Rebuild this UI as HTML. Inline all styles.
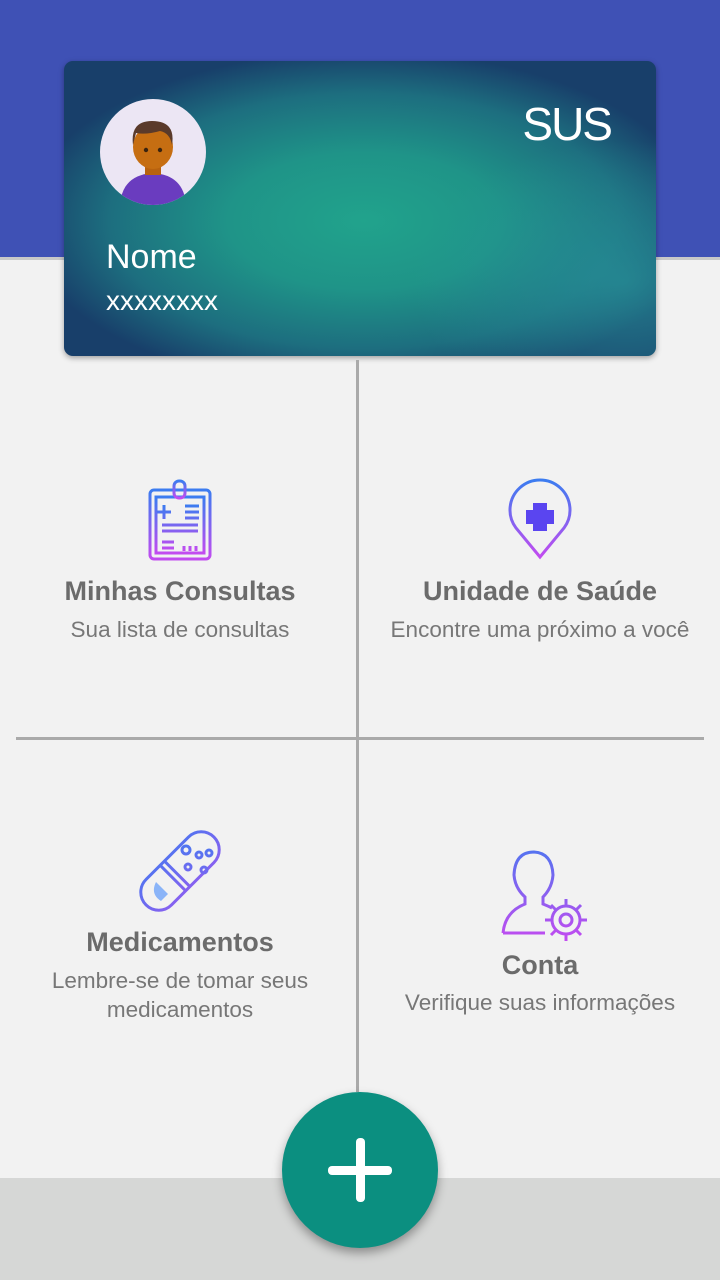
<!DOCTYPE html>
<html><head><meta charset="utf-8"><style>
*{margin:0;padding:0;box-sizing:border-box}
body{width:720px;height:1280px;background:#f2f2f2;position:relative;overflow:hidden;font-family:"Liberation Sans",Roboto,sans-serif}
.hdr{position:absolute;left:0;top:0;width:720px;height:260px;background:#3f51b5;border-bottom:3px solid #c8c8c8}
.card{position:absolute;left:64px;top:61px;width:592px;height:295px;border-radius:9px;overflow:hidden;
background:radial-gradient(ellipse 340px 170px at 300px 160px,#21a38c 0%,#1f9488 40%,#1d6e7f 75%,#183f6a 100%),#183f6a;
box-shadow:0 2px 6px rgba(0,0,0,.35)}
.card .r{position:absolute;inset:0;background:radial-gradient(ellipse 300px 200px at 560px 220px,rgba(40,150,155,.7),rgba(40,150,155,0) 70%)}
.av{position:absolute;left:36px;top:38px;width:106px;height:106px;border-radius:50%;background:#ece6f4;overflow:hidden}
.sus{position:absolute;right:45px;top:36px;color:#fff;font-size:46px;letter-spacing:-2px}
.nome{position:absolute;left:42px;top:177px;color:#fff;font-size:34px}
.num{position:absolute;left:42px;top:224px;color:#fff;font-size:28px}
.vl{position:absolute;left:356px;top:360px;width:3px;height:732px;background:#aaa}
.hl{position:absolute;left:16px;top:737px;width:688px;height:3px;background:#aaa}
.t{position:absolute;text-align:center;color:#6b6b6b;font-weight:bold;font-size:27px;width:360px}
.s{position:absolute;text-align:center;color:#777;font-size:22.5px;width:360px;line-height:29px}
.bot{position:absolute;left:0;top:1178px;width:720px;height:102px;background:#d6d7d6}
.fab{position:absolute;left:282px;top:1092px;width:156px;height:156px;border-radius:50%;background:#0b8f80;box-shadow:0 5px 10px rgba(0,0,0,.35)}
.fab:before{content:"";position:absolute;left:46px;top:74px;width:64px;height:9px;background:#fff;border-radius:4px}
.fab:after{content:"";position:absolute;left:74px;top:46px;width:9px;height:64px;background:#fff;border-radius:4px}
</style></head><body>
<div class="hdr"></div>
<div class="card"><div class="r"></div>
<div class="av"><svg width="106" height="106" viewBox="0 0 106 106">
<path d="M20 106 Q22 76 53 74 Q84 76 86 106Z" fill="#6a3cbf"/>
<rect x="45" y="62" width="16" height="14" fill="#b8620f"/>
<ellipse cx="53" cy="48" rx="20" ry="22" fill="#c66e12"/>
<path d="M33 46 Q30 22 52 22 Q76 22 72 46 Q70 34 60 32 Q46 36 36 34Z" fill="#5a3a2a"/>
<circle cx="46" cy="51" r="2.2" fill="#3a2410"/><circle cx="60" cy="51" r="2.2" fill="#3a2410"/>
</svg></div>
<div class="sus">SUS</div>
<div class="nome">Nome</div>
<div class="num">xxxxxxxx</div>
</div>
<div class="vl"></div><div class="hl"></div>
<svg style="position:absolute;left:0;top:0" width="720" height="1280">
<defs><linearGradient id="g" x1="0" y1="0" x2="0" y2="1"><stop offset="0" stop-color="#3c7cf0"/><stop offset="1" stop-color="#c24cf0"/></linearGradient>
<linearGradient id="g2" gradientUnits="userSpaceOnUse" x1="0" y1="830" x2="0" y2="940"><stop offset="0" stop-color="#3c7cf0"/><stop offset="1" stop-color="#c24cf0"/></linearGradient></defs>
<g fill="none" stroke="url(#g)" stroke-width="3">
<rect x="150" y="490" width="60" height="69" rx="4"/>
<rect x="156" y="497" width="48" height="56"/>
<rect x="174" y="481" width="11" height="17" rx="5"/>
<path d="M164 505v14M157 512h14M185 506h14M185 512h14M185 518h14M162 525h36M162 531h36M162 542h12M162 548h12M184 546v5M190 546v5M196 546v5"/>
<path d="M540 557 L516 528 A30 30 0 1 1 564 528 Z"/>
</g>
<g fill="none" stroke="url(#g2)" stroke-width="3">
<g transform="rotate(-45 180 871)">
<rect x="132" y="853" width="96" height="36" rx="18"/>
<path d="M170 853v36M176 853v36"/>
</g>
<circle cx="186" cy="850" r="4"/><circle cx="199" cy="855" r="3"/><circle cx="209" cy="853" r="3"/><circle cx="204" cy="870" r="3"/><circle cx="188" cy="867" r="3"/>
<path d="M503 933 Q505 912 525 904 L525 897 Q515 888 514 875 Q515 852 534 852 Q552 853 553 875 Q552 888 543 897 L543 904 Q548 906 552 908"/>
<path d="M503 933 H545"/>
<circle cx="566" cy="920" r="6"/>
<path d="M566 899v7M566 934v7M545 920h7M580 920h7M551 905l5 5M576 930l5 5M551 935l5-5M576 910l5-5"/>
<circle cx="566" cy="920" r="14"/>
</g>
<path d="M156 882 L168 894 L161 901 Q150 894 156 882Z" fill="#8ab4f8"/>
<path d="M533 503h14v7h7v14h-7v7h-14v-7h-7v-14h7z" fill="#5a45f0"/>
</svg>
<div class="t" style="left:0;top:576px">Minhas Consultas</div>
<div class="s" style="left:0;top:615px">Sua lista de consultas</div>
<div class="t" style="left:360px;top:576px">Unidade de Saúde</div>
<div class="s" style="left:360px;top:615px">Encontre uma próximo a você</div>
<div class="t" style="left:0;top:927px">Medicamentos</div>
<div class="s" style="left:0;top:966px">Lembre-se de tomar seus<br>medicamentos</div>
<div class="t" style="left:360px;top:950px">Conta</div>
<div class="s" style="left:360px;top:988px">Verifique suas informações</div>
<div class="bot"></div>
<div class="fab"></div>
</body></html>
